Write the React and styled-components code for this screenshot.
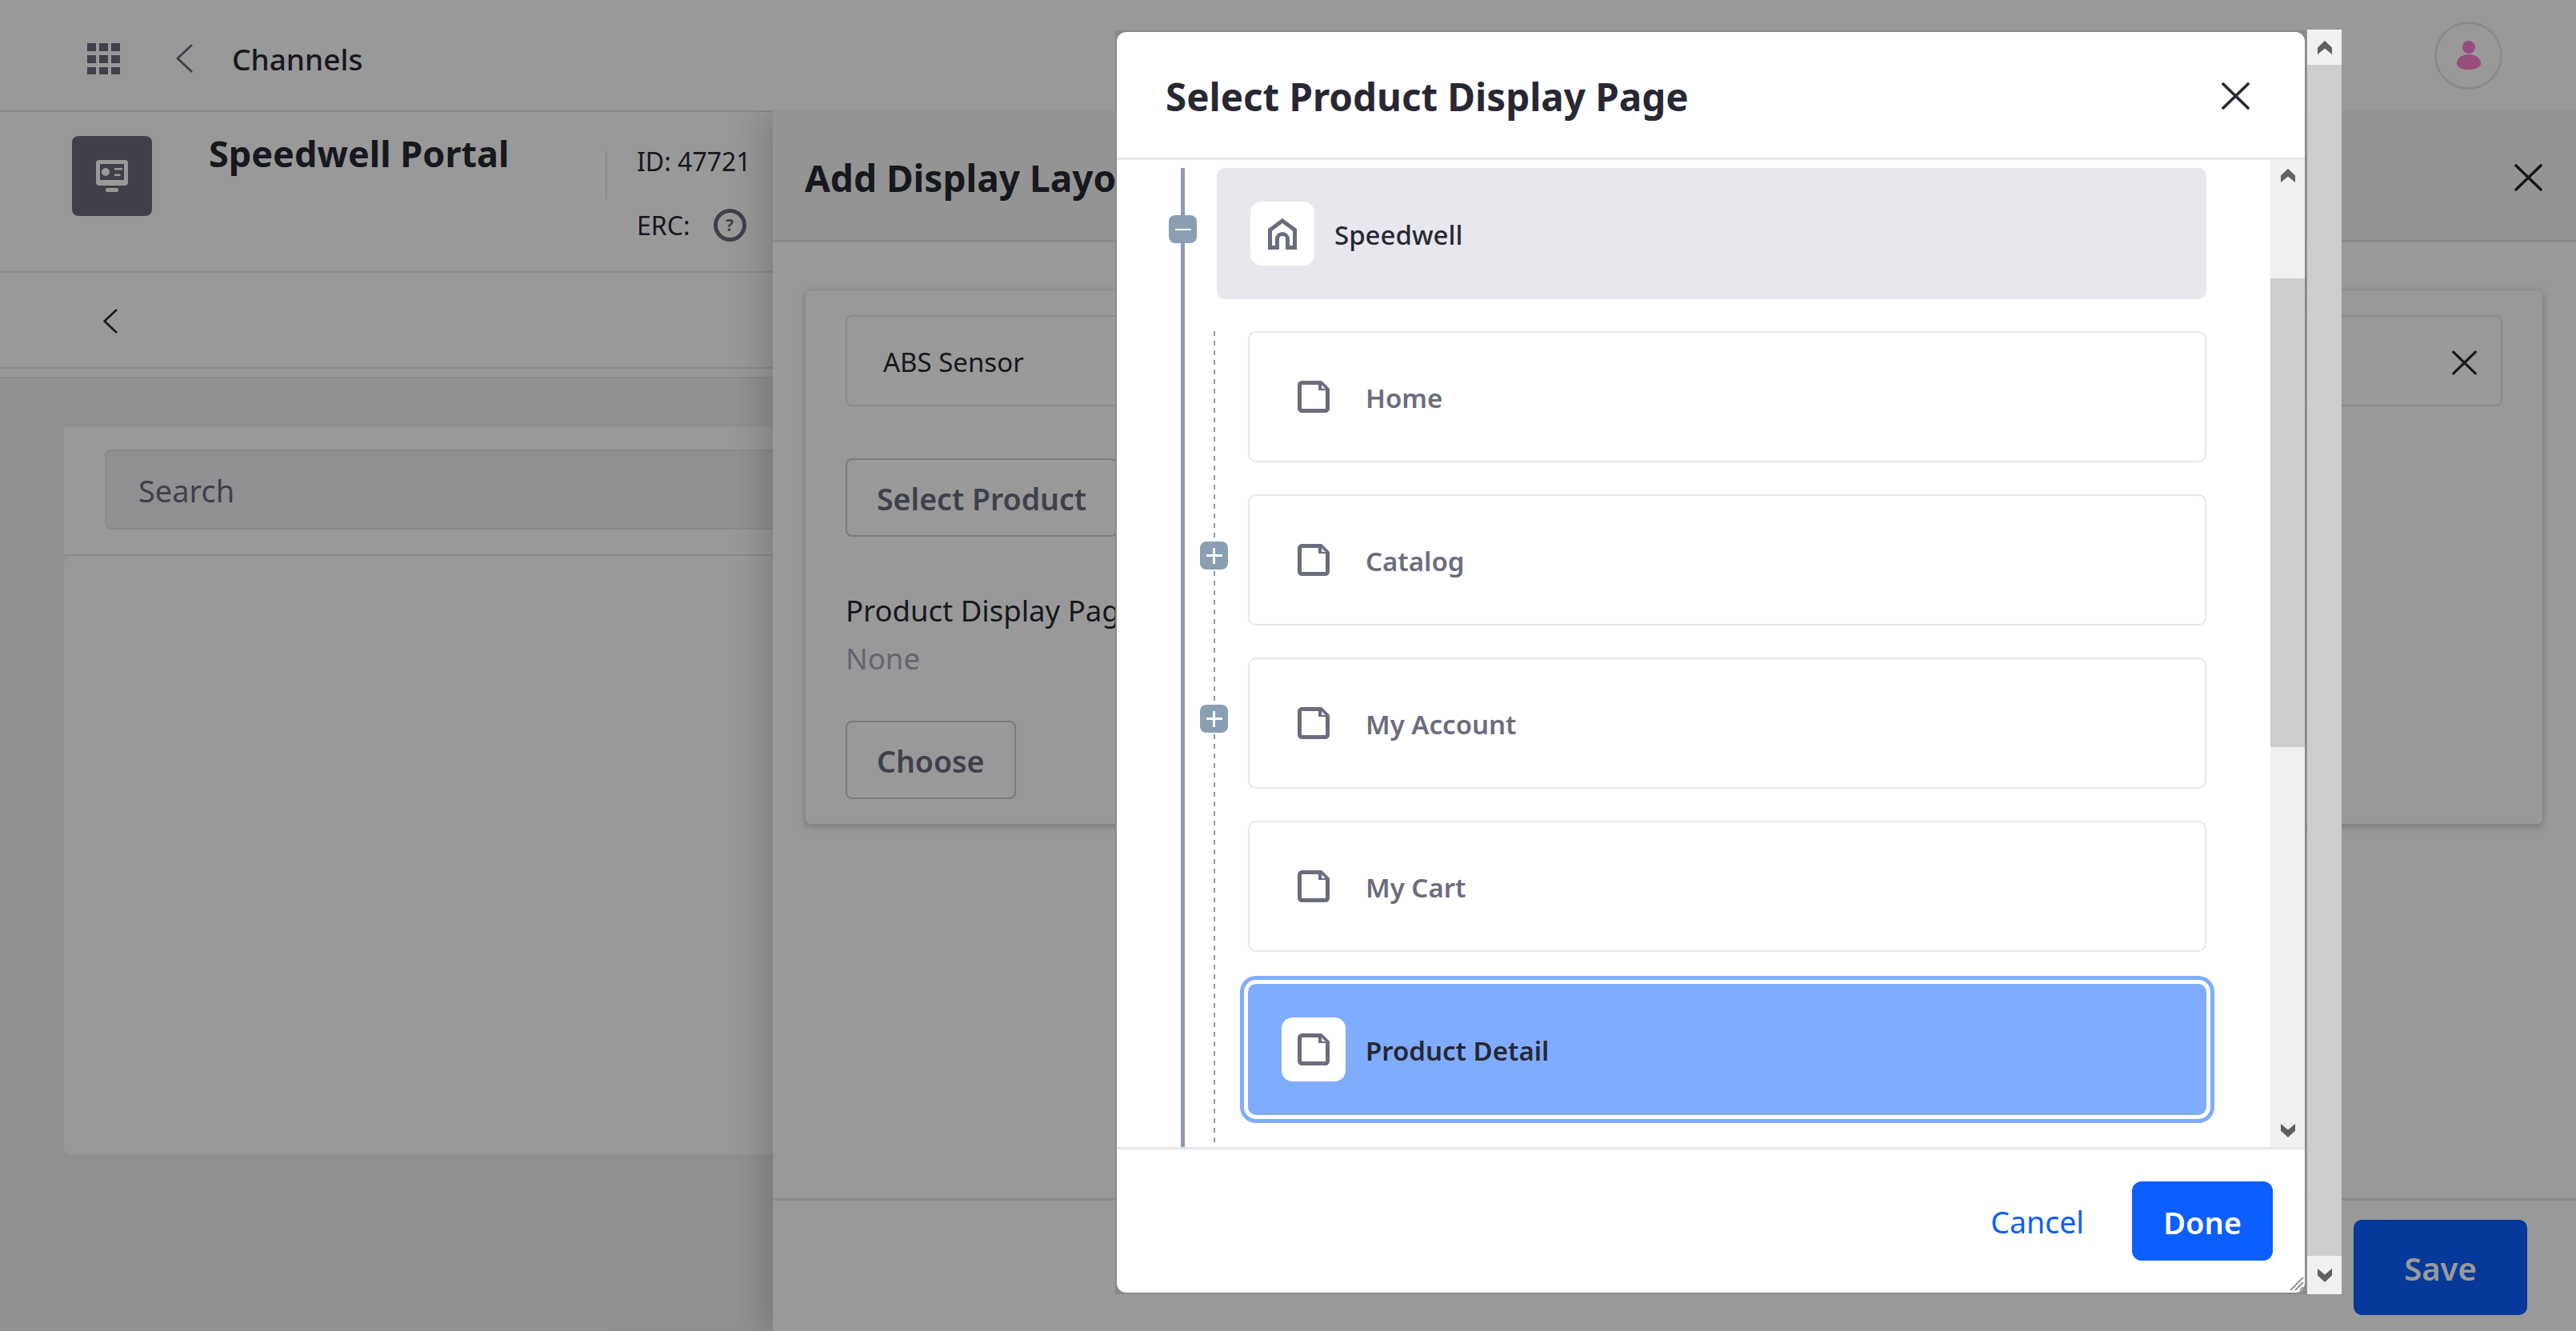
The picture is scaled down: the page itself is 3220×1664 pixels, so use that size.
import React from "react";
import styled, { createGlobalStyle } from "styled-components";

const GlobalStyle = createGlobalStyle`
  html, body {
    margin: 0;
    padding: 0;
    height: 1664px;
    overflow: hidden;
    background: #f0f1f3;
    font-family: "Noto Sans", "Open Sans", sans-serif;
    color: #272833;
  }
  * {
    box-sizing: border-box;
  }
`;

function App() {
  return (
    <Page>
      <GlobalStyle />
      <TopNav>
        <AppsIcon />
        <NavBack>
          <AngleLeft />
        </NavBack>
        <NavTitle>Channels</NavTitle>
        <Avatar>
          <PersonIcon />
        </Avatar>
      </TopNav>
      <ChannelHeader>
        <ChannelBadge>
          <ChannelIcon />
        </ChannelBadge>
        <ChannelName>Speedwell Portal</ChannelName>
        <ChannelMeta>
          <MetaLine>ID: 47721</MetaLine>
          <MetaLine>
            ERC:
            <HelpMark>?</HelpMark>
          </MetaLine>
        </ChannelMeta>
      </ChannelHeader>
      <TabRow>
        <TabBack>
          <AngleLeft $small />
        </TabBack>
      </TabRow>
      <TabStrip />
      <Main>
        <SearchCard>
          <SearchInput>Search</SearchInput>
        </SearchCard>
        <ResultsCard />
      </Main>

      <SidePanel>
        <PanelHeader>
          <PanelTitle>Add Display Layout</PanelTitle>
          <CloseIcon />
        </PanelHeader>
        <PanelBody>
          <PanelCard>
            <ProductInput>
              ABS Sensor
              <CloseIcon $small />
            </ProductInput>
            <OutlineButton $top={65}>Select Product</OutlineButton>
            <FieldLabel>Product Display Page</FieldLabel>
            <FieldValue>None</FieldValue>
            <OutlineButton $top={53}>Choose</OutlineButton>
          </PanelCard>
        </PanelBody>
        <PanelFooter>
          <SaveButton>Save</SaveButton>
        </PanelFooter>
      </SidePanel>

      <Overlay>
        <ModalFrame>
          <Modal>
            <ModalHeader>
              <ModalTitle>Select Product Display Page</ModalTitle>
              <CloseIcon />
            </ModalHeader>
            <ModalBody>
              <Tree>
                <TreeRoot>
                  <Toggle $root>
                    <ToggleMinus />
                  </Toggle>
                  <IconBox>
                    <HomeIcon />
                  </IconBox>
                  <RootLabel>Speedwell</RootLabel>
                </TreeRoot>
                <TreeChildren>
                  {pages.map((p) => (
                    <TreeRow key={p.name} $selected={p.selected}>
                      {p.expandable && (
                        <Toggle>
                          <TogglePlus />
                        </Toggle>
                      )}
                      {p.selected ? (
                        <IconBox>
                          <PageIcon />
                        </IconBox>
                      ) : (
                        <PlainIcon>
                          <PageIcon />
                        </PlainIcon>
                      )}
                      <RowLabel $selected={p.selected}>{p.name}</RowLabel>
                    </TreeRow>
                  ))}
                  {/* next row, only its top border shows above the footer */}
                  <TreeRow />
                </TreeChildren>
              </Tree>
              <Scrollbar>
                <ScrollArrow direction="up" />
                <ScrollArrow direction="down" />
              </Scrollbar>
            </ModalBody>
            <ModalFooter>
              <CancelLink>Cancel</CancelLink>
              <DoneButton>Done</DoneButton>
            </ModalFooter>
            <ResizeGrip />
          </Modal>
        </ModalFrame>
        <WindowScrollbar>
          <WindowArrowBox $height={44}>
            <ScrollArrow direction="up" />
          </WindowArrowBox>
          <WindowArrowBox $height={48}>
            <ScrollArrow direction="down" />
          </WindowArrowBox>
        </WindowScrollbar>
      </Overlay>
    </Page>
  );
}
export default App;

const pages = [
  { name: "Home" },
  { name: "Catalog", expandable: true },
  { name: "My Account", expandable: true },
  { name: "My Cart" },
  { name: "Product Detail", selected: true },
];

const AppsSvg = ({ className }) => (
  <svg className={className} viewBox="0 0 41 39">
    {[0, 15, 30].map((y) =>
      [0, 15, 30].map((x) => (
        <rect key={`${x}-${y}`} x={x} y={y} width="11" height="10" fill="#6b6c7e" />
      ))
    )}
  </svg>
);
const AppsIcon = styled(AppsSvg)`
  width: 41px;
  height: 39px;
  flex: none;
`;

const AngleSvg = ({ className }) => (
  <svg className={className} viewBox="0 0 22 36">
    <path d="M20 2 L3 18 L20 34" fill="none" stroke="currentColor" strokeWidth="3" strokeLinecap="round" strokeLinejoin="round" />
  </svg>
);
const AngleLeft = styled(AngleSvg)`
  width: ${(p) => (p.$small ? "19px" : "22px")};
  height: ${(p) => (p.$small ? "31px" : "36px")};
  display: block;
`;

const PersonSvg = ({ className }) => (
  <svg className={className} viewBox="0 0 30 36">
    <circle cx="15" cy="8" r="8" fill="#ff80cf" />
    <path d="M15 17 C24 17 30 22 30 28.5 C30 33.5 23 36 15 36 C7 36 0 33.5 0 28.5 C0 22 6 17 15 17 Z" fill="#ff80cf" />
  </svg>
);
const PersonIcon = styled(PersonSvg)`
  width: 30px;
  height: 36px;
`;

const ChannelSvg = ({ className }) => (
  <svg className={className} viewBox="0 0 40 40">
    <rect x="0" y="0" width="40" height="32" rx="4" fill="#fff" />
    <rect x="5" y="5" width="30" height="20" fill="#6b6c7e" />
    <circle cx="12" cy="15" r="5" fill="#fff" />
    <rect x="23" y="10" width="10" height="2.5" fill="#fff" />
    <rect x="23" y="17.5" width="7.5" height="2.5" fill="#fff" />
    <rect x="12" y="35" width="16" height="5" rx="2.5" fill="#fff" />
  </svg>
);
const ChannelIcon = styled(ChannelSvg)`
  width: 40px;
  height: 40px;
`;

const CloseSvg = ({ className }) => (
  <svg className={className} viewBox="0 0 35 34">
    <path d="M2 2 L33 32 M33 2 L2 32" fill="none" stroke="currentColor" strokeWidth="3.6" strokeLinecap="round" />
  </svg>
);
const CloseIcon = styled(CloseSvg)`
  width: ${(p) => (p.$small ? "31px" : "35px")};
  height: ${(p) => (p.$small ? "31px" : "34px")};
  margin-top: ${(p) => (p.$small ? "3px" : "0")};
  color: #272833;
  margin-left: auto;
  flex: none;
`;

const HomeSvg = ({ className }) => (
  <svg className={className} viewBox="0 0 36 39">
    <path
      d="M2.5 36.5 V14.5 L18 3 L33.5 14.5 V36.5 H24.5 V26 a6.5 6.5 0 0 0 -13 0 V36.5 Z"
      fill="none"
      stroke="#6b6c7e"
      strokeWidth="5"
    />
  </svg>
);
const HomeIcon = styled(HomeSvg)`
  width: 36px;
  height: 39px;
`;

const PageSvg = ({ className }) => (
  <svg className={className} viewBox="0 0 40 40">
    <path
      d="M5.5 2.5 H29 L37.5 11 V34.5 a3 3 0 0 1 -3 3 H5.5 a3 3 0 0 1 -3 -3 V5.5 a3 3 0 0 1 3 -3 Z"
      fill="#fff"
      stroke="#6b6c7e"
      strokeWidth="5"
      strokeLinejoin="round"
    />
    <path d="M26 2 V12 H38 L28 2 Z" fill="#6b6c7e" />
    <path d="M30 5 L35 10 H30 Z" fill="#e7e7ed" />
  </svg>
);
const PageIcon = styled(PageSvg)`
  width: 40px;
  height: 40px;
`;

const ArrowSvg = ({ className, direction }) => (
  <svg className={className} viewBox="0 0 18 17">
    <path
      d={direction === "up" ? "M0 8.5 L9 0 L18 8.5 V17 L9 9.5 L0 17 Z" : "M0 0 L9 7.5 L18 0 V8.5 L9 17 L0 8.5 Z"}
      fill="#606060"
    />
  </svg>
);
const ScrollArrow = styled(ArrowSvg)`
  width: 18px;
  height: 17px;
  display: block;
`;

const GripSvg = ({ className }) => (
  <svg className={className} viewBox="0 0 18 18">
    <path d="M17 1 L1 17 M17 7 L7 17 M17 13 L13 17" stroke="#767676" strokeWidth="1.6" />
  </svg>
);
const ResizeGrip = styled(GripSvg)`
  position: absolute;
  right: 1px;
  bottom: 2px;
  width: 18px;
  height: 18px;
`;

const Page = styled.div`
  position: relative;
  width: 3220px;
  height: 1664px;
  overflow: hidden;
`;
const TopNav = styled.div`
  height: 140px;
  background: #fff;
  border-bottom: 2px solid #e7e7ed;
  display: flex;
  align-items: center;
  padding: 8px 92px 0 109px;
`;
const NavBack = styled.div`
  margin-left: 69px;
  color: #6b6c7e;
`;
const NavTitle = styled.div`
  margin-left: 49px;
  font-size: 37px;
  font-weight: 500;
  color: #272833;
`;
const Avatar = styled.div`
  margin: -8px 0 0 auto;
  width: 85px;
  height: 85px;
  border: 3px solid #e7e7ed;
  border-radius: 50%;
  background: #fff;
  display: flex;
  align-items: center;
  justify-content: center;
`;
const ChannelHeader = styled.div`
  height: 201px;
  background: #fff;
  border-bottom: 2px solid #e7e7ed;
  display: flex;
  align-items: flex-start;
  padding: 30px 0 0 90px;
`;
const ChannelBadge = styled.div`
  width: 100px;
  height: 100px;
  background: #6b6c7e;
  border-radius: 8px;
  display: flex;
  align-items: center;
  justify-content: center;
`;
const ChannelName = styled.div`
  margin-left: 71px;
  width: 496px;
  font-size: 45px;
  font-weight: 700;
  line-height: 44px;
`;
const ChannelMeta = styled.div`
  position: relative;
  margin-top: 11px;
  padding-left: 39px;
  font-size: 32px;
  &::before {
    content: "";
    position: absolute;
    left: 0;
    top: 9px;
    width: 2px;
    height: 60px;
    background: #e7e7ed;
  }
`;
const MetaLine = styled.div`
  display: flex;
  align-items: center;
  gap: 29px;
  height: 40px;
  margin-bottom: 40px;
  white-space: nowrap;
`;
const HelpMark = styled.span`
  width: 41px;
  height: 41px;
  border: 5px solid #6b6c7e;
  border-radius: 50%;
  display: flex;
  align-items: center;
  justify-content: center;
  font-size: 21px;
  font-weight: 700;
  color: #6b6c7e;
`;
const TabRow = styled.div`
  height: 120px;
  background: #fff;
  border-bottom: 2px solid #e7e7ed;
  display: flex;
  align-items: center;
  padding: 2px 0 0 128px;
`;
const TabBack = styled.div`
  color: #272833;
`;
const TabStrip = styled.div`
  height: 12px;
  background: #fff;
  border-bottom: 2px solid #e7e7ed;
`;
const Main = styled.div`
  padding: 61px 80px 0;
`;
const SearchCard = styled.div`
  height: 161px;
  background: #fff;
  border-bottom: 2px solid #e7e7ed;
  padding: 28px 51px;
`;
const SearchInput = styled.div`
  height: 100px;
  background: #f0f1f3;
  border: 2px solid #e7e7ed;
  border-radius: 8px;
  display: flex;
  align-items: center;
  padding: 2px 0 0 40px;
  font-size: 38px;
  color: #6b6c7e;
`;
const ResultsCard = styled.div`
  height: 748px;
  background: #fff;
  border-radius: 8px;
`;
const SidePanel = styled.div`
  position: absolute;
  left: 966px;
  top: 138px;
  right: 0;
  bottom: 0;
  background: #fff;
  box-shadow: -12px 0 40px rgba(39, 40, 51, 0.22);
  clip-path: inset(0 0 0 -120px);
  display: flex;
  flex-direction: column;
`;
const PanelHeader = styled.div`
  height: 165px;
  background: #f7f7f7;
  border-bottom: 3px solid #e7e7ed;
  display: flex;
  align-items: center;
  padding: 6px 42px 0 40px;
`;
const PanelTitle = styled.div`
  font-size: 46px;
  font-weight: 700;
`;
const PanelBody = styled.div`
  flex: 1;
  padding: 59px 41px 0 40px;
  border-bottom: 3px solid #e7e7ed;
`;
const PanelCard = styled.div`
  height: 669px;
  background: #fff;
  border: 1px solid #e7e7ed;
  border-radius: 8px;
  box-shadow: 0 3px 8px rgba(39, 40, 51, 0.25);
  padding: 31px 50px;
`;
const ProductInput = styled.div`
  height: 114px;
  border: 2px solid #e7e7ed;
  border-radius: 8px;
  display: flex;
  align-items: center;
  padding: 2px 30px 0 45px;
  font-size: 33px;
`;
const OutlineButton = styled.div`
  width: fit-content;
  height: 98px;
  margin-top: ${(p) => p.$top}px;
  padding: 2px 37px 0;
  border: 2px solid #cdced9;
  border-radius: 8px;
  display: flex;
  align-items: center;
  font-size: 37.5px;
  font-weight: 600;
  color: #6b6c7e;
`;
const FieldLabel = styled.div`
  margin-top: 67px;
  font-size: 36.5px;
  line-height: 50px;
  color: #272833;
  white-space: nowrap;
`;
const FieldValue = styled.div`
  margin-top: 10px;
  font-size: 36.5px;
  line-height: 50px;
  color: #a7a9bc;
`;
const PanelFooter = styled.div`
  height: 163px;
  display: flex;
  justify-content: flex-end;
  padding: 24px 61px 0 0;
`;
const SaveButton = styled.div`
  width: 217px;
  height: 119px;
  background: #0b5fff;
  border-radius: 10px;
  display: flex;
  align-items: center;
  justify-content: center;
  padding-top: 2px;
  font-size: 40px;
  font-weight: 600;
  color: #fff;
`;
const Overlay = styled.div`
  position: absolute;
  inset: 0;
  background: rgba(0, 0, 0, 0.4);
  display: flex;
  align-items: flex-start;
  padding: 37px 0 0 1394px;
`;
const ModalFrame = styled.div`
  margin-top: 1px;
  width: 1489px;
  height: 1580px;
  padding: 2px;
  background: #8a8a8a;
`;
const Modal = styled.div`
  position: relative;
  width: 100%;
  height: 100%;
  background: #fff;
  border-radius: 12px;
  display: flex;
  flex-direction: column;
  overflow: hidden;
`;
const ModalHeader = styled.div`
  height: 160px;
  flex: none;
  border-bottom: 3px solid #e7e7ed;
  display: flex;
  align-items: center;
  padding: 3px 69px 0 61px;
`;
const ModalTitle = styled.div`
  font-size: 47.5px;
  font-weight: 700;
  color: #272833;
`;
const ModalBody = styled.div`
  flex: 1;
  min-height: 0;
  display: flex;
  overflow: hidden;
`;
const Tree = styled.div`
  position: relative;
  flex: 1;
  padding: 10px 80px 0 125px;
  overflow: hidden;
  &::before {
    content: "";
    position: absolute;
    left: 80px;
    top: 10px;
    bottom: 0;
    width: 5px;
    background: #8a9fb1;
  }
`;
const TreeRoot = styled.div`
  position: relative;
  height: 164px;
  background: #e7e7ed;
  border-radius: 10px;
  display: flex;
  align-items: center;
  padding-left: 42px;
`;
const TreeChildren = styled.div`
  position: relative;
  margin-top: 40px;
  padding-left: 39px;
  display: flex;
  flex-direction: column;
  gap: 40px;
  &::before {
    content: "";
    position: absolute;
    left: -4px;
    top: 0;
    bottom: 0;
    width: 2px;
    background: repeating-linear-gradient(to bottom, #8a9fb1 0 6px, transparent 6px 12px);
  }
`;
const TreeRow = styled.div`
  position: relative;
  flex: none;
  height: 164px;
  border-radius: 10px;
  display: flex;
  align-items: center;
  padding-left: ${(p) => (p.$selected ? "42px" : "60px")};
  background: ${(p) => (p.$selected ? "#80acff" : "#fff")};
  border: ${(p) => (p.$selected ? "none" : "2px solid #e7e7ed")};
  box-shadow: ${(p) => (p.$selected ? "0 0 0 5px #fff, 0 0 0 10px #80acff" : "none")};
`;
const Toggle = styled.div`
  position: absolute;
  left: ${(p) => (p.$root ? "-60px" : "-62px")};
  top: ${(p) => (p.$root ? "59px" : "57px")};
  width: 35px;
  height: 35px;
  background: #8a9fb1;
  border-radius: 8px;
  display: flex;
  align-items: center;
  justify-content: center;
`;
const ToggleMinus = styled.div`
  width: 20px;
  height: 2px;
  background: #fff;
`;
const TogglePlus = styled(ToggleMinus)`
  position: relative;
  height: 3px;
  &::after {
    content: "";
    position: absolute;
    left: 8.5px;
    top: -8.5px;
    width: 3px;
    height: 20px;
    background: #fff;
  }
`;
const IconBox = styled.div`
  width: 80px;
  height: 80px;
  background: #fff;
  border-radius: 14px;
  display: flex;
  align-items: center;
  justify-content: center;
  flex: none;
`;
const PlainIcon = styled.div`
  width: 40px;
  height: 40px;
  flex: none;
  line-height: 0;
`;
const RootLabel = styled.div`
  margin: 2px 0 0 25px;
  font-size: 33px;
  font-weight: 500;
  color: #272833;
`;
const RowLabel = styled.div`
  margin: 2px 0 0 ${(p) => (p.$selected ? "25px" : "45px")};
  font-size: 33px;
  font-weight: 600;
  color: ${(p) => (p.$selected ? "#272833" : "#6b6c7e")};
`;
const Scrollbar = styled.div`
  position: relative;
  width: 43px;
  flex: none;
  display: flex;
  flex-direction: column;
  justify-content: space-between;
  align-items: center;
  padding: 11px 0 12px;
  background: linear-gradient(
    to bottom,
    #f0f0f0 0 148px,
    #cdcdcd 148px 734px,
    #f0f0f0 734px
  );
`;
const ModalFooter = styled.div`
  height: 182px;
  flex: none;
  border-top: 3px solid #e7e7ed;
  display: flex;
  align-items: flex-start;
  justify-content: flex-end;
  padding: 40px 40px 0 0;
`;
const CancelLink = styled.div`
  margin: 25px 60px 0 0;
  font-size: 37.5px;
  color: #0b5fff;
`;
const DoneButton = styled.div`
  width: 176px;
  height: 99px;
  background: #0b5fff;
  border-radius: 12px;
  display: flex;
  align-items: center;
  justify-content: center;
  padding-top: 2px;
  font-size: 38px;
  font-weight: 600;
  color: #fff;
`;
const WindowScrollbar = styled.div`
  margin-left: 1px;
  width: 43px;
  height: 1581px;
  background: #cdcdcd;
  display: flex;
  flex-direction: column;
  justify-content: space-between;
`;
const WindowArrowBox = styled.div`
  height: ${(p) => p.$height}px;
  background: #f0f0f0;
  display: flex;
  align-items: center;
  justify-content: center;
`;
